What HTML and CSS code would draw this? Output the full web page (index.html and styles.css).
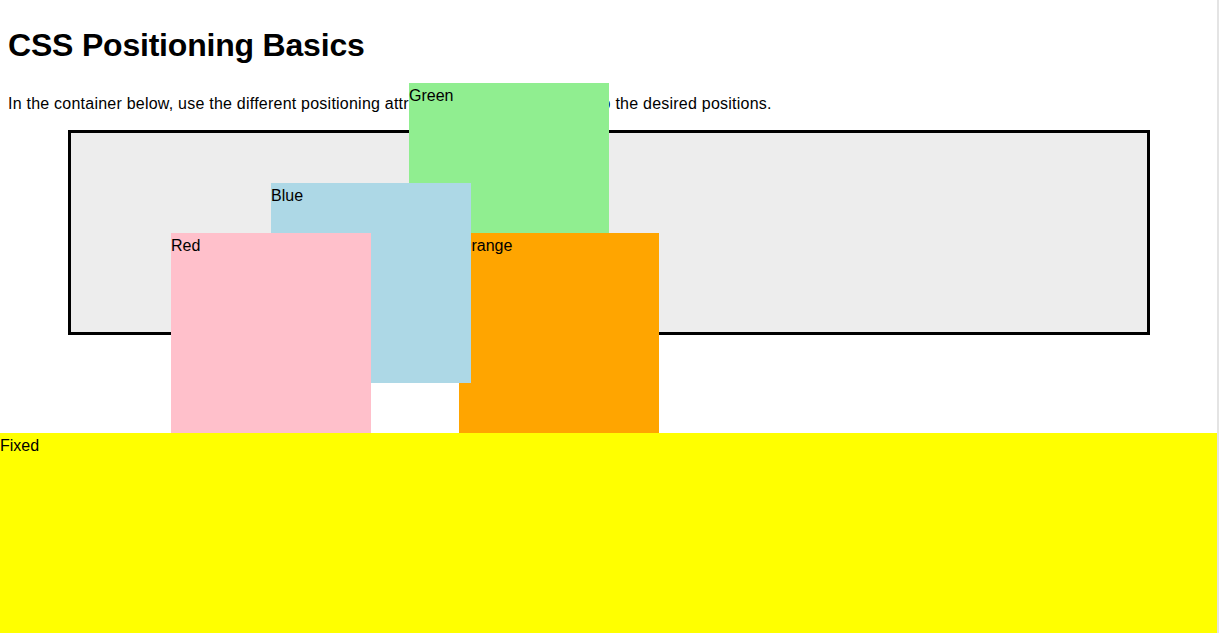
FILE: index.html
```html
<!DOCTYPE html>
<html lang="en">
<head>
<meta charset="utf-8">
<title>CSS Positioning Basics</title>
<link rel="stylesheet" href="styles.css">
</head>
<body>
<h1 class="title">CSS Positioning Basics</h1>
<p class="intro">In the container below, use the different positioning attributes to move the boxes to the desired positions.</p>
<div class="container">
  <div class="box box-green">Green</div>
  <div class="box box-orange">Orange</div>
  <div class="box box-blue">Blue</div>
  <div class="box box-red">Red</div>
</div>
<div class="box box-fixed">Fixed</div>
<div class="frame-edge"></div>
</body>
</html>
```

FILE: styles.css
```css
html, body {
  background: #fff;
  overflow: visible;
}
body {
  margin: 0 8px;
  min-height: 633px;
  font-family: "Liberation Sans", Arial, Helvetica, sans-serif;
  font-size: 16px;
  color: #000;
}
.title {
  font-size: 32px;
  font-weight: bold;
  line-height: 37px;
  letter-spacing: -0.2px;
  margin: 0;
  padding-top: 27px;
}
.intro {
  line-height: 24px;
  letter-spacing: 0.23px;
  margin: 28px 0 0;
}
.container {
  position: relative;
  box-sizing: border-box;
  width: 1082px;
  height: 205px;
  margin: 14px 0 0 60px;
  border: 3px solid #000;
  background: #ededed;
  overflow: visible;
}
.box {
  box-sizing: border-box;
  width: 200px;
  height: 200px;
  line-height: 25px;
}
.box-green {
  position: absolute;
  left: 338px;
  top: -50px;
  background: #90ee90;
}
.box-orange {
  position: absolute;
  left: 388px;
  top: 100px;
  background: #ffa500;
}
.box-blue {
  position: absolute;
  left: 200px;
  top: 50px;
  background: #add8e6;
}
.box-red {
  position: absolute;
  left: 100px;
  top: 100px;
  background: #ffc0cb;
}
.box-fixed {
  position: fixed;
  left: 0;
  bottom: 0;
  width: calc(100% - 2px);
  background: #ffff00;
  z-index: 5;
}
.frame-edge {
  position: fixed;
  top: 0;
  right: 0;
  width: 2px;
  height: 100%;
  background: #e4e4e4;
  z-index: 6;
}
```
